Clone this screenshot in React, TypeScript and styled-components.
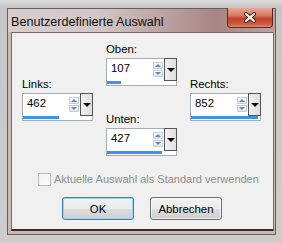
import React from 'react';
import styled, { createGlobalStyle } from 'styled-components';

const Global = createGlobalStyle`
  html, body { margin: 0; padding: 0; }
  body {
    width: 282px;
    height: 243px;
    overflow: hidden;
    background: linear-gradient(180deg, #dcdcdc 0px, #c6c6c6 7px, #cdcdcd 100%);
    font-family: "Liberation Sans", Arial, sans-serif;
  }
`;

const Window = styled.div`
  margin: 8px 0 0 7px;
  width: 269px;
  height: 227px;
  box-sizing: border-box;
  border: 1px solid #6a5c5c;
  background: #c9b9b9;
  display: flex;
  flex-direction: column;
`;

const TitleBar = styled.div`
  height: 23px;
  flex: none;
  display: flex;
  align-items: flex-start;
  background: linear-gradient(90deg, #d8cece 0%, #d2c5c5 35%, #b99c9c 62%, #a88585 78%, #b9a3a3 100%);
`;

const Title = styled.div`
  padding: 5px 0 0 3px;
  font-size: 12.6px;
  line-height: 16px;
  color: #101010;
`;

const CloseButton = styled.div`
  margin: -1px 2px 0 auto;
  width: 46px;
  height: 20px;
  box-sizing: border-box;
  border: 1px solid #5c2a22;
  border-top: none;
  border-radius: 0 0 4px 4px;
  background: linear-gradient(180deg, #e6a898 0%, #d9775f 40%, #c2412a 55%, #cf5a40 85%, #dd8a74 100%);
  display: flex;
  align-items: center;
  justify-content: center;
`;

const Client = styled.div`
  flex: 1;
  margin: 0 1px 3px 3px;
  border: 1px solid #7c6a6a;
  border-bottom: 2px solid #3e2a2a;
  background: #f0f0f0;
  display: flex;
  flex-direction: column;
`;

const Grid = styled.div`
  padding: 10px 0 0 10px;
  display: grid;
  grid-template-columns: repeat(3, 71px);
  column-gap: 13px;
  align-items: center;
`;

const MiddleColumn = styled.div`
  display: flex;
  flex-direction: column;
  gap: 27px;
`;

const Group = styled.div`
  display: flex;
  flex-direction: column;
`;

const Label = styled.div`
  font-size: 11.4px;
  line-height: 13px;
  margin: 0 0 2px 0;
  color: #000;
`;

const Box = styled.div`
  position: relative;
  width: 71px;
  height: 28px;
  box-sizing: border-box;
  border: 1px solid #a7abb2;
  background: #fff;
  display: flex;
  flex-direction: column;
`;

const TopRow = styled.div`
  height: 21px;
  display: flex;
  align-items: flex-start;
`;

const Value = styled.div`
  flex: 1;
  padding: 3px 0 0 4px;
  font-size: 11.4px;
  line-height: 13px;
  color: #000;
`;

const Spinner = styled.div`
  margin: 3px 1px 0 0;
  display: flex;
  flex-direction: column;
  gap: 1px;
`;

const SpinButton = styled.div`
  width: 10px;
  height: 7px;
  box-sizing: border-box;
  border: 1px solid #c7cfdc;
  background: linear-gradient(180deg, #f6f8fb, #e1e7f0);
  display: flex;
  align-items: center;
  justify-content: center;
`;

const Arrow = styled.div<{ $dir: 'up' | 'down' }>`
  width: 0;
  height: 0;
  border-left: 3px solid transparent;
  border-right: 3px solid transparent;
  ${(p) => (p.$dir === 'up' ? 'border-bottom: 3px solid #6d84b0;' : 'border-top: 3px solid #6d84b0;')}
`;

const DropButton = styled.div`
  margin: -1px -1px 0 0;
  width: 13px;
  height: 23px;
  box-sizing: border-box;
  border: 1px solid #555;
  background: linear-gradient(90deg, #f2f2f2, #dedede);
  display: flex;
  align-items: center;
  justify-content: center;
`;

const DropArrow = styled.div`
  width: 0;
  height: 0;
  border-left: 4px solid transparent;
  border-right: 4px solid transparent;
  border-top: 4px solid #000;
`;

const Track = styled.div`
  margin-top: 1px;
  height: 3px;
  display: flex;
`;

const Fill = styled.div`
  height: 3px;
  background: #3b93ee;
`;

const CheckRow = styled.div`
  margin-top: 17px;
  padding-left: 26px;
  display: flex;
  align-items: center;
  gap: 3px;
`;

const CheckBox = styled.div`
  width: 13px;
  height: 13px;
  box-sizing: border-box;
  border: 1px solid #bcbcbc;
  background: linear-gradient(135deg, #f4f4f4, #fafafa);
`;

const CheckText = styled.div`
  font-size: 11px;
  line-height: 13px;
  color: #8d8d8d;
`;

const ButtonRow = styled.div`
  margin-top: 11px;
  padding-left: 50px;
  display: flex;
  gap: 16px;
`;

const Button = styled.div<{ $default?: boolean }>`
  width: 72px;
  height: 23px;
  box-sizing: border-box;
  border: 1px solid ${(p) => (p.$default ? '#3c7fb1' : '#707070')};
  border-radius: 3px;
  background: linear-gradient(180deg, #f2f2f2 0%, #ebebeb 50%, #dddddd 51%, #cfcfcf 100%);
  box-shadow: inset 0 0 0 1px ${(p) => (p.$default ? '#9ad4f5' : 'rgba(255,255,255,0.6)')};
  display: flex;
  align-items: center;
  justify-content: center;
  font-size: 11.4px;
  color: #000;
`;

type SpinProps = { label: string; value: number; max: number };

function SpinField({ label, value, max }: SpinProps) {
  const w = Math.round((value / max) * 69);
  return (
    <Group>
      <Label>{label}</Label>
      <Box>
        <TopRow>
          <Value>{value}</Value>
          <Spinner>
            <SpinButton><Arrow $dir="up" /></SpinButton>
            <SpinButton><Arrow $dir="down" /></SpinButton>
          </Spinner>
          <DropButton><DropArrow /></DropButton>
        </TopRow>
        <Track>
          <Fill style={{ width: `${w}px` }} />
        </Track>
      </Box>
    </Group>
  );
}

export default function App() {
  return (
    <>
      <Global />
      <Window>
        <TitleBar>
          <Title>Benutzerdefinierte Auswahl</Title>
          <CloseButton>
            <svg width="14" height="11" viewBox="0 0 14 11">
              <path d="M3 2 L11 9 M11 2 L3 9" stroke="#4a2018" strokeWidth="4" strokeLinecap="round" />
              <path d="M3 2 L11 9 M11 2 L3 9" stroke="#ffffff" strokeWidth="2.2" strokeLinecap="round" />
            </svg>
          </CloseButton>
        </TitleBar>
        <Client>
          <Grid>
            <SpinField label="Links:" value={462} max={880} />
            <MiddleColumn>
              <SpinField label="Oben:" value={107} max={540} />
              <SpinField label="Unten:" value={427} max={540} />
            </MiddleColumn>
            <SpinField label="Rechts:" value={852} max={880} />
          </Grid>
          <CheckRow>
            <CheckBox />
            <CheckText>Aktuelle Auswahl als Standard verwenden</CheckText>
          </CheckRow>
          <ButtonRow>
            <Button $default>OK</Button>
            <Button>Abbrechen</Button>
          </ButtonRow>
        </Client>
      </Window>
    </>
  );
}
